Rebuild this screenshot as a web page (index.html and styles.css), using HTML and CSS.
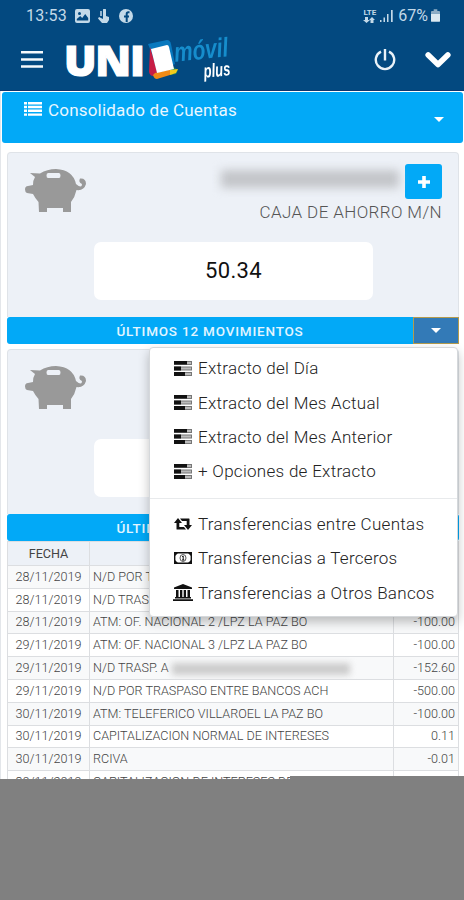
FILE: index.html
```html
<!DOCTYPE html>
<html lang="es">
<head>
    <meta charset="UTF-8">
    <meta name="viewport" content="width=device-width, initial-scale=1.0">
    <title>UNI móvil plus</title>
    <link rel="stylesheet" href="styles.css">
</head>
<body>
    <!-- iconos compartidos -->
    <svg class="sprite" width="0" height="0">
        <symbol id="pig" viewBox="0 0 62 44">
            <path fill="#999" fill-rule="evenodd" d="M5 5 L15 5.500 Q22 1 31 1 Q48 2 51 16 Q57 21 57 16 Q53 14 55 10.500 Q61 10 61 16 Q59 23 51.500 22 Q50 29 46 34 L46 44 H38 V40 H22 V44 H14 L13.500 34 Q10 30 8 26 L2 25 Q0 24 0 21.500 Q0 18 3 18 L8 17 Q8 12 10 9 Z M23 5 Q21.500 5 21.500 7.500 Q21.500 10 23 10 H34 Q35.500 10 35.500 7.500 Q35.500 5 34 5 Z"/>
        </symbol>
        <symbol id="tasks" viewBox="0 0 18 15">
            <path fill="#777" d="M0 0h18v4H0zM0 5.500h18v4H0zM0 11h18v4H0z"/>
            <path fill="#bbb" d="M13 1h4v2h-4zM7 6.500h10v2H7zM11 12h6v2h-6z"/>
            <path fill="#111" d="M0 0h13v3.500H0zM0 5.500h7v4H0zM0 11h11v4H0z"/>
        </symbol>
    </svg>

    <header class="header">
        <div class="status-bar">
            <span class="time">13:53</span>
            <svg class="status-image" width="15" height="14" viewBox="0 0 15 14"><path fill="#c3d9e8" fill-rule="evenodd" d="M2 0h11a2 2 0 0 1 2 2v10a2 2 0 0 1-2 2H2a2 2 0 0 1-2-2V2a2 2 0 0 1 2-2zm-.2 11.500h11.400V9l-3-4-3 4-2-2-3.400 3z"/><circle cx="4.500" cy="4.500" r="1.500" fill="#034980"/></svg>
            <svg class="status-touch" width="12" height="14" viewBox="0 0 12 14"><path fill="#c3d9e8" d="M5 1a1.500 1.500 0 0 1 3 0v6l3 1v3l-2 3H4L0 9.500 1 8l4 2z"/><path stroke="#c3d9e8" stroke-width="1.500" d="M3 2v5"/></svg>
            <svg width="14" height="14" viewBox="0 0 14 14"><circle cx="7" cy="7" r="7" fill="#c3d9e8"/><path fill="none" stroke="#034980" stroke-width="2" d="M10.500 3.300H9.300Q7.700 3.300 7.700 5v8M5 7.500h5"/></svg>
            <div class="status-right">
                <span class="lte"><b>LTE</b><svg width="12" height="6" viewBox="0 0 12 6"><path fill="#c3d9e8" d="M2 0h3v3h2L3.500 6 0 3h2zM9 0l3 3h-1.500v3h-3V3H6z"/></svg></span>
                <svg width="13" height="14" viewBox="0 0 13 14"><path fill="#c3d9e8" d="M0 11h1.500v2H0zM3.500 8.500H5V13H3.500zM7 5h1.500v8H7zM11 1h1.700v12H11z"/></svg>
                <span class="charge">67%</span>
                <svg width="9" height="13" viewBox="0 0 10 14"><path fill="#8fadc5" d="M3 0h4v2h2q1 0 1 1v2H0V3q0-1 1-1h2z"/><path fill="#dce9f1" d="M0 5h10v8q0 1-1 1H1q-1 0-1-1z"/></svg>
            </div>
        </div>
        <div class="nav">
            <svg class="menu" width="22" height="17" viewBox="0 0 22 17"><path fill="#f5f9fc" d="M0 0h22v2.600H0zM0 7.200h22v2.600H0zM0 14.200h22v2.600H0z"/></svg>
            <div class="logo">
                <span class="uni">UNI</span>
                <svg width="31" height="40" viewBox="0 0 31 40">
                    <path fill="#0878be" d="M0 4 19 0q3 0 4 4l4 20-7 4L4 14z"/>
                    <path fill="#c71d45" d="M2 7l8 28-5 1q-3 0-4-4z"/>
                    <path fill="#f08a16" d="M7 33l17-4 1 5-16 5q-3 0-4-4z"/>
                    <path fill="#228b54" d="M22 25l8 5-2 4-6 1z"/>
                    <path fill="#f3cb1d" d="M22 30l8-1-2 4-6 2z"/>
                    <path fill="#fff" d="M3 9 19 5q1.500 0 2 2l5 22-17 4z"/>
                </svg>
                <div class="movil"><span>móvil</span><em>plus</em></div>
            </div>
            <svg class="power" width="22" height="22" viewBox="0 0 22 22"><path fill="none" stroke="#eaf2f8" stroke-width="2.400" d="M7 2.600a9.200 9.200 0 1 0 8 0M11 0v11.500"/></svg>
            <svg class="chevron" width="26" height="18" viewBox="0 0 26 18"><path fill="none" stroke="#fff" stroke-width="5.600" stroke-linecap="round" stroke-linejoin="round" d="M3.200 4l9.800 9.500L22.800 4"/></svg>
        </div>
    </header>

    <main class="page">
        <div class="section-title">
            <svg width="18" height="14" viewBox="0 0 18 14"><path fill="#fff" d="M0 0h3v2.400H0zM4 0h14v2.400H4zM0 3.800h3v2.400H0zM4 3.800h14v2.400H4zM0 7.600h3V10H0zM4 7.600h14V10H4zM0 11.400h3v2.400H0zM4 11.400h14v2.400H4z"/></svg>
            <span>Consolidado de Cuentas</span>
            <i class="caret"></i>
        </div>

        <div class="accounts">
            <section class="card">
                <div class="card-top">
                    <svg class="pig" width="62" height="44"><use href="#pig"/></svg>
                    <div class="account">
                        <div class="account-row">
                            <span class="hidden-name"></span>
                            <span class="plus"><svg width="12" height="12" viewBox="0 0 12 12"><path fill="#fff" d="M4.200 0h3.600v4.200H12v3.600H7.800V12H4.200V7.800H0V4.200h4.200z"/></svg></span>
                        </div>
                        <div class="account-type">CAJA DE AHORRO M/N</div>
                    </div>
                </div>
                <div class="balance">50.34</div>
            </section>
            <div class="movements">
                <span class="movements-label">ÚLTIMOS 12 MOVIMIENTOS</span>
                <span class="movements-toggle"><i class="caret"></i></span>
                <ul class="dropdown">
                    <li><svg width="18" height="15"><use href="#tasks"/></svg><span>Extracto del Día</span></li>
                    <li><svg width="18" height="15"><use href="#tasks"/></svg><span>Extracto del Mes Actual</span></li>
                    <li><svg width="18" height="15"><use href="#tasks"/></svg><span>Extracto del Mes Anterior</span></li>
                    <li><svg width="18" height="15"><use href="#tasks"/></svg><span>+ Opciones de Extracto</span></li>
                    <li class="divider"></li>
                    <li><svg width="18" height="12" viewBox="0 0 18 12"><path fill="#111" d="M0 5 4 0l4 5H5.300v4H10l2 2.500H3Q2.500 11.500 2.500 11V5zM18 7l-4 5-4-5h2.700V3H8L6 .5h9q.5 0 .5.500v6z"/></svg><span>Transferencias entre Cuentas</span></li>
                    <li><svg width="18" height="12" viewBox="0 0 18 12"><path fill="none" stroke="#111" stroke-width="1.400" d="M.7.7h16.600v10.600H.7z"/><path fill="#111" d="M1 1h3L1 4zM17 1v3l-3-3zM1 11V8l3 3zM17 11h-3l3-3z"/><ellipse cx="9" cy="6" rx="3" ry="3.500" fill="none" stroke="#333" stroke-width=".8"/><path fill="none" stroke="#111" d="M8 4.700 9.200 4v4M8 8h2.300"/></svg><span>Transferencias a Terceros</span></li>
                    <li><svg class="bank" width="20" height="17" viewBox="0 0 20 17"><path fill="#111" d="M10 0l9 3.500V5H1V3.500zM3 6h2.500v7H3zM7 6h2.300v7H7zM10.700 6H13v7h-2.300zM14.500 6H17v7h-2.500zM2 13h16v1.500H2zM0 15.300h20V17H0z"/></svg><span>Transferencias a Otros Bancos</span></li>
                </ul>
            </div>

            <section class="card card-second">
                <div class="card-top">
                    <svg class="pig" width="62" height="44"><use href="#pig"/></svg>
                </div>
                <div class="balance"></div>
            </section>
            <div class="movements">
                <span class="movements-label">ÚLTIMOS 12 MOVIMIENTOS</span>
            </div>

            <table class="history">
                <thead>
                    <tr><th class="date">FECHA</th><th></th><th class="amount"></th></tr>
                </thead>
                <tbody>
                    <tr><td>28/11/2019</td><td>N/D POR TRASPASO</td><td></td></tr>
                    <tr><td>28/11/2019</td><td>N/D TRASP. A</td><td></td></tr>
                    <tr><td>28/11/2019</td><td>ATM: OF. NACIONAL 2 /LPZ LA PAZ BO</td><td>-100.00</td></tr>
                    <tr><td>29/11/2019</td><td>ATM: OF. NACIONAL 3 /LPZ LA PAZ BO</td><td>-100.00</td></tr>
                    <tr><td>29/11/2019</td><td>N/D TRASP. A <span class="hidden-payee"></span></td><td>-152.60</td></tr>
                    <tr><td>29/11/2019</td><td>N/D POR TRASPASO ENTRE BANCOS ACH</td><td>-500.00</td></tr>
                    <tr><td>30/11/2019</td><td>ATM: TELEFERICO VILLAROEL LA PAZ BO</td><td>-100.00</td></tr>
                    <tr><td>30/11/2019</td><td>CAPITALIZACION NORMAL DE INTERESES</td><td>0.11</td></tr>
                    <tr><td>30/11/2019</td><td>RCIVA</td><td>-0.01</td></tr>
                    <tr><td>30/11/2019</td><td>CAPITALIZACION DE INTERESES DE</td><td></td></tr>
                </tbody>
            </table>
        </div>
    </main>
    <footer class="footer"></footer>
</body>
</html>
```
FILE: styles.css
```css
* {
    box-sizing: border-box;
}

body {
    margin: 0;
    height: 900px;
    display: flex;
    flex-direction: column;
    overflow: hidden;
    font-family: Roboto, "Liberation Sans", sans-serif;
    background: #fff;
}

svg {
    display: block;
    flex: none;
}

.sprite {
    position: absolute;
}

.header {
    height: 91px;
    flex: none;
    background: #034980;
    border-bottom: 1px solid #10366e;
}

.status-bar {
    display: flex;
    align-items: center;
    height: 31px;
    padding: 0 24px 0 26px;
    color: #c3d9e8;
    font-size: 16px;
}

.time {
    width: 49px;
    letter-spacing: 0.2px;
}

.status-image {
    margin-right: 8px;
}

.status-touch {
    margin-right: 9px;
}

.status-right {
    margin-left: auto;
    display: flex;
    align-items: center;
}

.lte {
    margin-right: 4px;
    font-size: 8px;
    line-height: 8px;
}

.lte b {
    display: block;
}

.charge {
    margin: 0 3px 0 5px;
}

.nav {
    display: flex;
    align-items: center;
    height: 58px;
    padding: 0 13px 0 21px;
}

.menu {
    margin-top: -2px;
}

.logo {
    display: flex;
    align-items: center;
    margin-left: 21px;
}

.uni {
    width: 84px;
    font-family: "Open Sans", sans-serif;
    font-size: 43px;
    line-height: 50px;
    font-weight: 800;
    letter-spacing: -1.2px;
    -webkit-text-stroke: 1.2px #fff;
    color: #fff;
}

.movil {
    width: 54px;
    margin: -2px 0 0 -4px;
    font-family: "Liberation Sans", sans-serif;
    font-style: italic;
    transform: rotate(-6deg);
}

.movil span {
    display: block;
    font-size: 27px;
    line-height: 25px;
    font-weight: bold;
    color: #168dcc;
    transform: scaleX(0.77);
    transform-origin: left;
}

.movil em {
    display: block;
    font-size: 19px;
    line-height: 18px;
    text-align: right;
    font-weight: bold;
    color: #fff;
    transform: scaleX(0.68);
    transform-origin: right;
}

.power {
    margin-left: auto;
}

.chevron {
    margin-left: 29px;
}

.page {
    height: 688px;
    flex: none;
    overflow: hidden;
    padding: 1px 1px 0 2px;
    border-left: 1px solid #e3e6ea;
}

.section-title {
    display: flex;
    height: 51px;
    margin-left: -1px;
    padding: 10px 19px 0 22px;
    background: #02a9f7;
    border-radius: 3px;
    color: #e9f7ff;
    font-size: 17px;
    line-height: 17px;
    letter-spacing: 0.2px;
}

.section-title span {
    margin-left: 6px;
}

.caret {
    width: 0;
    height: 0;
    border: 5px solid transparent;
    border-top-color: #fff;
    border-bottom: 0;
}

.section-title .caret {
    margin: 15px 0 0 auto;
}

.accounts {
    margin-top: 9px;
    padding: 0 4px;
}

.card {
    height: 165px;
    padding: 15px 16px;
    background: #edf1f7;
    border: 1px solid #dfe3e8;
    border-bottom: 0;
    border-radius: 4px 4px 0 0;
}

.card-top {
    display: flex;
    justify-content: space-between;
    height: 74px;
}

.pig {
    margin-left: 1px;
}

.account {
    margin-top: -4px;
}

.account-row {
    display: flex;
    justify-content: flex-end;
    align-items: center;
}

.hidden-name {
    width: 178px;
    height: 18px;
    margin: -5px 6px 0 0;
    background: #c3c5c9;
    filter: blur(5px);
}

.plus {
    display: flex;
    align-items: center;
    justify-content: center;
    width: 37px;
    height: 35px;
    background: #02a9f7;
    border-radius: 3px;
}

.account-type {
    margin-top: 4px;
    text-align: right;
    font-size: 17px;
    line-height: 19px;
    font-weight: 300;
    letter-spacing: 0.38px;
    color: #555;
}

.balance {
    width: 279px;
    height: 58px;
    margin-left: 70px;
    border-radius: 7px;
    background: #fff;
    text-align: center;
    font-size: 22px;
    line-height: 58px;
    letter-spacing: 0.3px;
    color: #111;
}

.movements {
    position: relative;
    display: flex;
    height: 27px;
    background: #02a9f7;
    border-radius: 3px;
    color: #e3f5ff;
}

.movements-label {
    width: 406px;
    text-align: center;
    font-size: 13.5px;
    line-height: 28px;
    font-weight: 500;
    letter-spacing: 0.8px;
}

.movements-toggle {
    display: flex;
    align-items: center;
    justify-content: center;
    width: 46px;
    background: #337ab7;
    border: 1px solid #b39b4e;
}

.dropdown {
    position: absolute;
    top: 30px;
    right: 1px;
    z-index: 1;
    width: 309px;
    height: 270px;
    margin: 0;
    padding: 3px 0 0 24px;
    list-style: none;
    background: #fff;
    border: 1px solid #d5d8db;
    border-radius: 4px;
    box-shadow: 0 5px 11px rgba(0, 0, 0, 0.25);
    color: #222;
    font-size: 17px;
    font-weight: 300;
    letter-spacing: 0.29px;
}

.dropdown li {
    display: flex;
    align-items: center;
    height: 34.4px;
}

.dropdown .bank {
    margin: 0 -1px;
}

.dropdown span {
    margin-left: 6px;
    white-space: nowrap;
}

.dropdown .divider {
    height: 1px;
    margin: 9px 0 8px -24px;
    background: #e8eaec;
}

.card-second {
    margin-top: 5px;
}

.history {
    width: 452px;
    border-collapse: collapse;
    table-layout: fixed;
    font-size: 12.6px;
    line-height: 16px;
    font-weight: 300;
    color: #444;
}

.history th,
.history td {
    height: 22.8px;
    padding: 0 3px;
    border: 1px solid #dcdee1;
    white-space: nowrap;
    overflow: hidden;
}

.history th {
    height: 24px;
    background: #edf1f7;
    font-weight: 400;
}

.history .date {
    width: 82px;
}

.history .amount {
    width: 65px;
}

.history td:first-child {
    text-align: center;
}

.history td:last-child {
    text-align: right;
}

.history tr:nth-child(odd) td {
    background: #f8f9fa;
}

.hidden-payee {
    display: inline-block;
    width: 178px;
    height: 12px;
    vertical-align: middle;
    background: #ccc;
    filter: blur(3px);
}

.footer {
    position: relative;
    height: 121px;
    flex: none;
    background: #808080;
}

.footer::before {
    content: "";
    position: absolute;
    top: -3px;
    right: 0;
    width: 174px;
    height: 3px;
    background: #808080;
}
```
